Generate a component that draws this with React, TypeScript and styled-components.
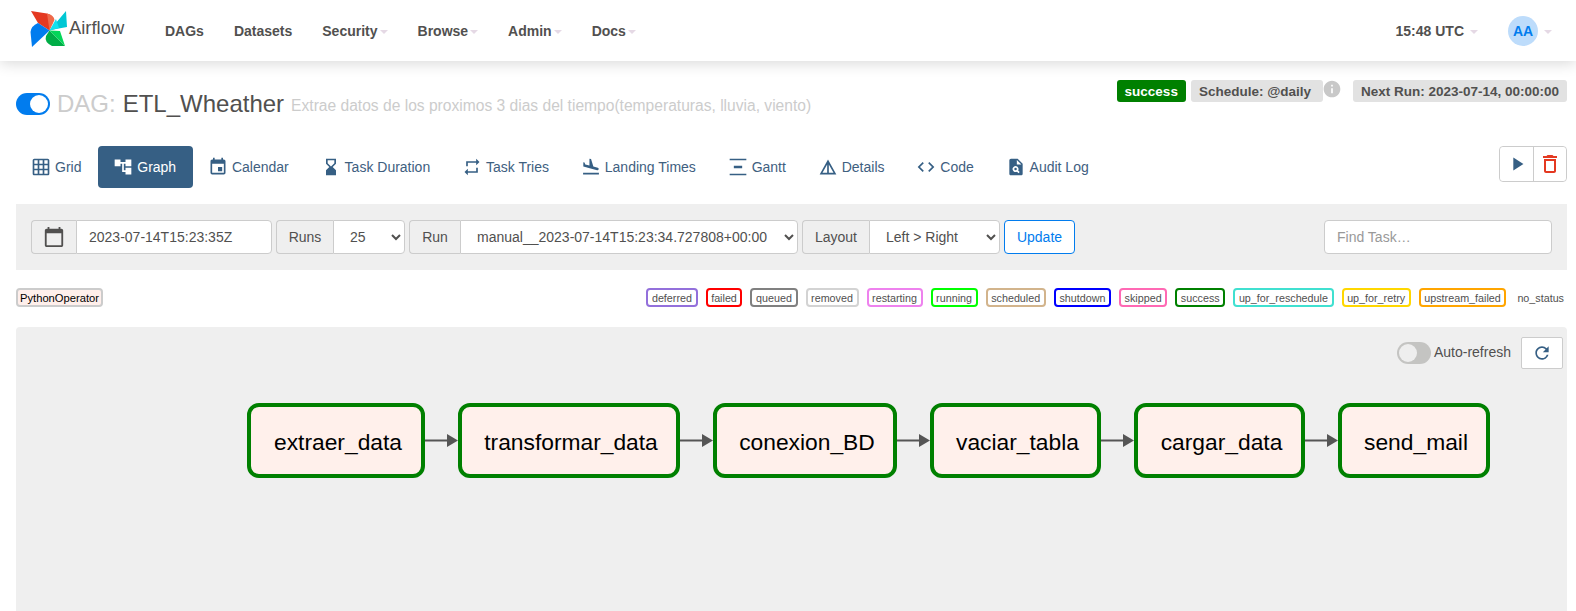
import * as React from 'react';
import styled, { createGlobalStyle } from 'styled-components';
import {
  MdAccountTree,
  MdCalendarToday,
  MdCode,
  MdDeleteOutline,
  MdDetails,
  MdEvent,
  MdFlightLand,
  MdGridOn,
  MdHourglassBottom,
  MdInfo,
  MdPlagiarism,
  MdPlayArrow,
  MdRefresh,
  MdRepeat,
  MdVerticalDistribute,
} from 'react-icons/md';

const GlobalStyle = createGlobalStyle`
  html, body {
    margin: 0;
    height: 611px;
    overflow: hidden;
    background: #fff;
    font-family: "Liberation Sans", Arial, sans-serif;
    font-size: 14px;
    color: #51504f;
  }
`;

const Navbar = styled.header`
  display: flex;
  align-items: center;
  height: 61px;
  padding: 0 24px 0 31px;
  background: #fff;
  box-shadow: 0 2px 14px rgba(0, 0, 0, 0.16);
`;

const Brand = styled.div`
  display: flex;
  align-items: center;
  width: 134px;
  font-size: 18.4px;
  color: #51504f;
  svg {
    margin: -3px -2px 0 -5px;
  }
  span {
    margin: -5px 0 0 -1px;
  }
`;

const NavLinks = styled.nav`
  display: flex;
  gap: 30px;
`;

const NavLink = styled.span`
  display: flex;
  align-items: center;
  font-weight: bold;
  color: #51504f;
`;

const Caret = styled.i`
  display: inline-block;
  margin: 2px 0 0 2px;
  border-top: 4px solid #e5d9e5;
  border-left: 4px solid transparent;
  border-right: 4px solid transparent;
`;

const NavRight = styled.div`
  display: flex;
  align-items: center;
  margin-left: auto;
  & > ${Caret} {
    margin-left: 6px;
  }
`;

const Clock = styled(NavLink)`
  margin-right: 30px;
  ${Caret} {
    margin-left: 6px;
  }
`;

const Avatar = styled.span`
  display: flex;
  align-items: center;
  justify-content: center;
  width: 30px;
  height: 30px;
  border-radius: 50%;
  background: #bddcfb;
  color: #017cee;
  font-weight: bold;
`;

const Main = styled.main`
  padding: 0 9px 0 16px;
`;

const TitleRow = styled.div`
  display: flex;
  align-items: flex-start;
  height: 85px;
  padding-top: 19px;
  box-sizing: border-box;
`;

const Title = styled.div`
  display: flex;
  align-items: center;
  height: 30px;
  margin-top: 9px;
`;

const Toggle = styled.span<{ $on?: boolean }>`
  position: relative;
  display: inline-block;
  flex: none;
  width: 34px;
  height: 22px;
  border-radius: 11px;
  background: ${(p) => (p.$on ? '#017cee' : '#c4c4c2')};
  &::after {
    content: '';
    position: absolute;
    top: 2px;
    left: ${(p) => (p.$on ? '14px' : '2px')};
    width: 18px;
    height: 18px;
    border-radius: 50%;
    background: ${(p) => (p.$on ? '#fff' : '#eee')};
  }
`;

const DagLabel = styled.span`
  margin-left: 7px;
  font-size: 24px;
  color: #ccc;
`;

const DagName = styled.span`
  margin-left: 7px;
  font-size: 24px;
  color: #51504f;
`;

const DagDescription = styled.span`
  margin: 3px 0 0 7px;
  font-size: 15.6px;
  color: #ccc;
`;

const StatusBlock = styled.div`
  display: flex;
  align-items: flex-start;
  margin-left: auto;
`;

const Badge = styled.span<{ $success?: boolean }>`
  display: inline-flex;
  align-items: center;
  justify-content: center;
  height: 22px;
  padding: 0 8px;
  border-radius: 3px;
  font-size: 13.5px;
  font-weight: bold;
  white-space: nowrap;
  background: ${(p) => (p.$success ? '#008000' : '#e2e2e2')};
  color: ${(p) => (p.$success ? '#fff' : '#51504f')};
`;

const ScheduleBadge = styled(Badge)`
  width: 132px;
  box-sizing: border-box;
  justify-content: flex-start;
  margin-left: 5px;
`;

const InfoIcon = styled(MdInfo)`
  width: 20px;
  height: 20px;
  margin: -1px 11px 0 -1px;
  color: #c8c8c8;
`;

const TabRow = styled.div`
  display: flex;
  align-items: flex-start;
`;

const Tab = styled.a<{ $active?: boolean }>`
  display: flex;
  align-items: center;
  height: 42px;
  padding: 0 16.8px 0 15px;
  border-radius: 4px;
  color: ${(p) => (p.$active ? '#fff' : '#40607f')};
  background: ${(p) => (p.$active ? '#365f84' : 'transparent')};
  white-space: nowrap;
  svg {
    width: 20px;
    height: 20px;
    margin-right: 4px;
    color: ${(p) => (p.$active ? '#fff' : '#365f84')};
  }
`;

const ActionGroup = styled.div`
  display: flex;
  margin-left: auto;
  height: 36px;
  border: 1px solid #ccc;
  border-radius: 4px;
  box-sizing: border-box;
`;

const ActionButton = styled.button<{ $danger?: boolean }>`
  display: flex;
  align-items: center;
  justify-content: center;
  width: 33px;
  padding: 0;
  border: 0;
  background: #fff;
  border-radius: 4px;
  color: ${(p) => (p.$danger ? '#e43921' : '#365f84')};
  & + & {
    border-left: 1px solid #ccc;
    border-radius: 0 4px 4px 0;
  }
`;

const FilterBar = styled.form`
  display: flex;
  gap: 4px;
  height: 66px;
  margin-top: 16px;
  padding: 16px 15px;
  box-sizing: border-box;
  background: #efefef;
`;

const InputGroup = styled.div`
  display: flex;
  height: 34px;
`;

const Addon = styled.span<{ $w: number }>`
  display: flex;
  align-items: center;
  justify-content: center;
  box-sizing: border-box;
  width: ${(p) => p.$w}px;
  border: 1px solid #ccc;
  border-right: 0;
  border-radius: 4px 0 0 4px;
  background: #efefef;
  color: #51504f;
  svg {
    width: 22px;
    height: 22px;
  }
`;

const TextInput = styled.input<{ $w: number }>`
  box-sizing: border-box;
  width: ${(p) => p.$w}px;
  height: 34px;
  padding: 0 12px;
  border: 1px solid #ccc;
  border-radius: 0 4px 4px 0;
  background: #fff;
  color: #51504f;
  font: 14px "Liberation Sans", Arial, sans-serif;
  &::placeholder {
    color: #999;
    opacity: 1;
  }
`;

const SearchInput = styled(TextInput)`
  margin-left: auto;
  border-radius: 4px;
`;

const Select = styled.select<{ $w: number }>`
  box-sizing: border-box;
  width: ${(p) => p.$w}px;
  height: 34px;
  padding: 0 4px 0 12px;
  border: 1px solid #ccc;
  border-radius: 0 4px 4px 0;
  background: #fff;
  color: #51504f;
  font: 14px "Liberation Sans", Arial, sans-serif;
`;

const UpdateButton = styled.button`
  box-sizing: border-box;
  width: 71px;
  height: 34px;
  border: 1px solid #017cee;
  border-radius: 4px;
  background: #fff;
  color: #017cee;
  font: 14px "Liberation Sans", Arial, sans-serif;
`;

const Legend = styled.div`
  display: flex;
  justify-content: space-between;
  margin-top: 18px;
`;

const StateList = styled.div`
  display: flex;
  gap: 8px;
`;

const Chip = styled.span<{ $border: string }>`
  display: flex;
  align-items: center;
  box-sizing: border-box;
  height: 19px;
  padding: 0 3.6px;
  border: 2px solid ${(p) => p.$border};
  border-radius: 4px;
  background: #fff;
  font-size: 10.75px;
  color: #51504f;
`;

const OperatorChip = styled(Chip)`
  width: 87px;
  padding: 0 2px;
  background: #ffefeb;
  color: #000;
  font-size: 11.2px;
`;

const NoStatus = styled(Chip)`
  padding: 0 1px;
  border-color: transparent;
`;

const GraphPanel = styled.section`
  height: 300px;
  margin-top: 20px;
  border-radius: 4px 4px 0 0;
  background: #efefef;
`;

const GraphTools = styled.div`
  display: flex;
  align-items: center;
  justify-content: flex-end;
  height: 32px;
  padding: 10px 4px 0 0;
`;

const ToolLabel = styled.span`
  margin: -2px 10px 0 3px;
  color: #51504f;
`;

const RefreshButton = styled.button`
  display: flex;
  align-items: center;
  justify-content: center;
  box-sizing: border-box;
  width: 42px;
  height: 32px;
  padding: 0;
  border: 1px solid #ccc;
  border-radius: 2px;
  background: #fff;
  color: #365f84;
  svg {
    width: 20px;
    height: 20px;
  }
`;

const TaskFlow = styled.div`
  display: flex;
  align-items: flex-start;
  margin-top: 34px;
  padding-left: 231px;
`;

const TaskNode = styled.div<{ $w: number }>`
  display: flex;
  align-items: center;
  justify-content: center;
  flex: none;
  box-sizing: border-box;
  width: ${(p) => p.$w}px;
  height: 75px;
  padding: 4px 0 0 4px;
  border: 4px solid #008000;
  border-radius: 12px;
  background: #fff0eb;
  color: #000;
  font-size: 22.8px;
`;

const EdgeIcon = styled.svg`
  flex: none;
  display: block;
  width: 33px;
  height: 75px;
`;

const Edge = () => (
  <EdgeIcon viewBox="0 0 33 75">
    <path d="M0 37.5H22" stroke="#555" strokeWidth="2" fill="none" />
    <path d="M22 31L33 37.5L22 44Z" fill="#555" />
  </EdgeIcon>
);

const Logo = () => (
  <svg width="46" height="44" viewBox="0 0 46 44">
    <path d="M5 4L21 6.5Q27 8 27 12L23.5 23.5L12 16Z" fill="#e43921" />
    <path d="M21 6.5Q28 8 28.5 13L23.5 23.5Z" fill="#ee6a4a" />
    <path d="M40 4L41 20L30 22L23.5 23.5Z" fill="#00c7d4" />
    <path d="M23.5 23.5L30 12L33 21Z" fill="#11e1ee" />
    <path d="M6 40L4.5 25Q5 19 12 16L23.5 23.5Z" fill="#017cee" />
    <path d="M39 39L26 39Q18 35 20 29L23.5 23.5Z" fill="#00ad46" />
    <path d="M23.5 23.5L34 24L39 39Z" fill="#04d659" />
  </svg>
);

const tabs = [
  { label: 'Grid', icon: <MdGridOn /> },
  { label: 'Graph', icon: <MdAccountTree />, active: true },
  { label: 'Calendar', icon: <MdEvent /> },
  { label: 'Task Duration', icon: <MdHourglassBottom /> },
  { label: 'Task Tries', icon: <MdRepeat /> },
  { label: 'Landing Times', icon: <MdFlightLand /> },
  { label: 'Gantt', icon: <MdVerticalDistribute /> },
  { label: 'Details', icon: <MdDetails /> },
  { label: 'Code', icon: <MdCode /> },
  { label: 'Audit Log', icon: <MdPlagiarism /> },
];

const states = [
  ['deferred', 'mediumpurple'],
  ['failed', 'red'],
  ['queued', 'gray'],
  ['removed', 'lightgrey'],
  ['restarting', 'violet'],
  ['running', 'lime'],
  ['scheduled', 'tan'],
  ['shutdown', 'blue'],
  ['skipped', 'hotpink'],
  ['success', 'green'],
  ['up_for_reschedule', 'turquoise'],
  ['up_for_retry', 'gold'],
  ['upstream_failed', 'orange'],
];

const tasks = [
  { name: 'extraer_data', width: 178 },
  { name: 'transformar_data', width: 222 },
  { name: 'conexion_BD', width: 184 },
  { name: 'vaciar_tabla', width: 171 },
  { name: 'cargar_data', width: 171 },
  { name: 'send_mail', width: 152 },
];

const App = () => (
  <React.Fragment>
    <GlobalStyle />
    <Navbar>
      <Brand>
        <Logo />
        <span>Airflow</span>
      </Brand>
      <NavLinks>
        <NavLink>DAGs</NavLink>
        <NavLink>Datasets</NavLink>
        <NavLink>Security<Caret /></NavLink>
        <NavLink>Browse<Caret /></NavLink>
        <NavLink>Admin<Caret /></NavLink>
        <NavLink>Docs<Caret /></NavLink>
      </NavLinks>
      <NavRight>
        <Clock>15:48 UTC<Caret /></Clock>
        <Avatar>AA</Avatar>
        <Caret />
      </NavRight>
    </Navbar>
    <Main>
      <TitleRow>
        <Title>
          <Toggle $on />
          <DagLabel>DAG:</DagLabel>
          <DagName>ETL_Wheather</DagName>
          <DagDescription>Extrae datos de los proximos 3 dias del tiempo(temperaturas, lluvia, viento)</DagDescription>
        </Title>
        <StatusBlock>
          <Badge $success>success</Badge>
          <ScheduleBadge>Schedule: @daily</ScheduleBadge>
          <InfoIcon />
          <Badge>Next Run: 2023-07-14, 00:00:00</Badge>
        </StatusBlock>
      </TitleRow>
      <TabRow>
        {tabs.map((t) => (
          <Tab key={t.label} $active={t.active}>
            {t.icon}
            {t.label}
          </Tab>
        ))}
        <ActionGroup>
          <ActionButton type="button"><MdPlayArrow size={22} /></ActionButton>
          <ActionButton type="button" $danger><MdDeleteOutline size={24} /></ActionButton>
        </ActionGroup>
      </TabRow>
      <FilterBar>
        <InputGroup>
          <Addon $w={45}><MdCalendarToday /></Addon>
          <TextInput $w={196} defaultValue="2023-07-14T15:23:35Z" />
        </InputGroup>
        <InputGroup>
          <Addon $w={57}>Runs</Addon>
          <Select $w={72} defaultValue="25"><option>25</option></Select>
        </InputGroup>
        <InputGroup>
          <Addon $w={51}>Run</Addon>
          <Select $w={338}><option>manual__2023-07-14T15:23:34.727808+00:00</option></Select>
        </InputGroup>
        <InputGroup>
          <Addon $w={67}>Layout</Addon>
          <Select $w={131}><option>Left &gt; Right</option></Select>
        </InputGroup>
        <UpdateButton type="button">Update</UpdateButton>
        <SearchInput $w={228} placeholder="Find Task…" />
      </FilterBar>
      <Legend>
        <OperatorChip $border="#ccc">PythonOperator</OperatorChip>
        <StateList>
          {states.map(([name, color]) => (
            <Chip key={name} $border={color}>{name}</Chip>
          ))}
          <NoStatus $border="transparent">no_status</NoStatus>
        </StateList>
      </Legend>
      <GraphPanel>
        <GraphTools>
          <Toggle />
          <ToolLabel>Auto-refresh</ToolLabel>
          <RefreshButton type="button"><MdRefresh /></RefreshButton>
        </GraphTools>
        <TaskFlow>
          {tasks.map((task, i) => (
            <React.Fragment key={task.name}>
              {i > 0 && <Edge />}
              <TaskNode $w={task.width}>{task.name}</TaskNode>
            </React.Fragment>
          ))}
        </TaskFlow>
      </GraphPanel>
    </Main>
  </React.Fragment>
);

export default App;
